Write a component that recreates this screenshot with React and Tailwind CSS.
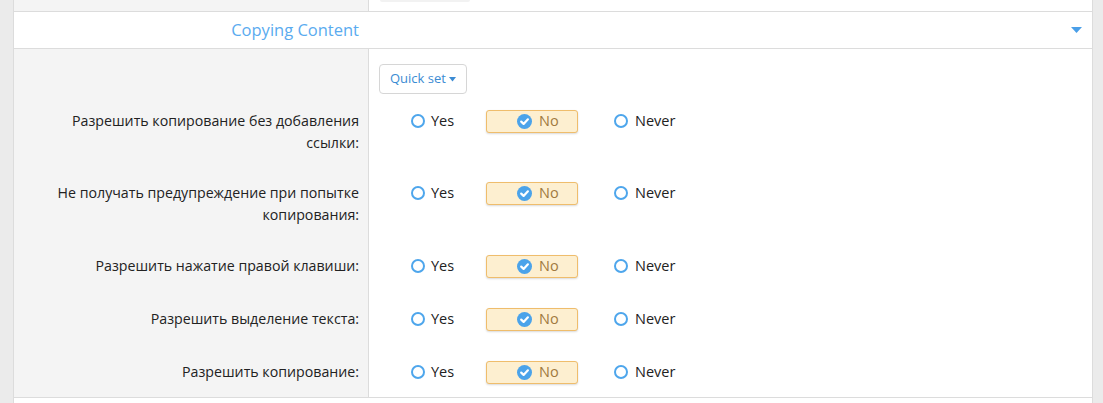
import React from "react";

const rows = [
  { lines: ["Разрешить копирование без добавления", "ссылки:"], h: "h-[72px]" },
  { lines: ["Не получать предупреждение при попытке", "копирования:"], h: "h-[73px]" },
  { lines: ["Разрешить нажатие правой клавиши:"], h: "h-[53px]" },
  { lines: ["Разрешить выделение текста:"], h: "h-[53px]" },
  { lines: ["Разрешить копирование:"], h: "h-[36px]" },
];

function Circle() {
  return <span className="block w-[14px] h-[14px] rounded-full border-[2.5px] border-[#4ea6ec] bg-white shrink-0" />;
}

function Checked() {
  return (
    <svg width="15" height="15" viewBox="0 0 15 15" className="shrink-0">
      <circle cx="7.5" cy="7.5" r="7.5" fill="#4ba3ea" />
      <path d="M4.2 7.6 L6.6 9.9 L10.9 5.3" fill="none" stroke="#fff" strokeWidth="2.2" strokeLinecap="round" strokeLinejoin="round" />
    </svg>
  );
}

function Options() {
  return (
    <div className="flex items-center h-[22px] text-[14.5px]">
      <div className="flex items-center w-[75px] ml-[42px]">
        <Circle />
        <span className="ml-[6px] text-[#222]">Yes</span>
      </div>
      <div className="flex items-center w-[92px] h-[23px] pl-[30px] rounded-[3px] border border-[#efbd6c] bg-[#fdefd0] shadow-[0_1px_2px_rgba(0,0,0,0.15)]">
        <Checked />
        <span className="ml-[7px] text-[#a07a3e]">No</span>
      </div>
      <div className="flex items-center ml-[36px]">
        <Circle />
        <span className="ml-[7px] text-[#222]">Never</span>
      </div>
    </div>
  );
}

export default function App() {
  return (
    <div className="flex w-[1103px] h-[403px] bg-[#ebebeb] overflow-hidden" style={{ fontFamily: '"Open Sans", "Noto Sans", sans-serif' }}>
      <div className="w-[14px] shrink-0 border-r border-[#dcdcdc]" />
      <div className="w-[1079px] shrink-0 flex flex-col bg-white border-r border-[#dcdcdc]">
        <div className="flex h-[12px] border-b border-[#dcdcdc] shrink-0">
          <div className="w-[355px] bg-[#f4f4f4] border-r border-[#dcdcdc]" />
          <div className="flex-1">
            <div className="ml-[11px] w-[90px] h-[2px] rounded-b bg-[#f2f2f2]" />
          </div>
        </div>
        <div className="flex items-center h-[37px] border-b border-[#dcdcdc] shrink-0">
          <div className="w-[355px] pr-[10px] text-right text-[16.5px] text-[#5aabef]">Copying Content</div>
          <div className="flex-1 flex justify-end pr-[10px]">
            <svg width="11" height="6" viewBox="0 0 11 6"><path d="M0 0 H11 L5.5 6 Z" fill="#4a9fe8" /></svg>
          </div>
        </div>
        <div className="flex border-b border-[#dcdcdc] shrink-0">
          <div className="w-[355px] bg-[#f4f4f4] border-r border-[#dcdcdc] pr-[9px] text-right text-[14.2px] text-[#222] leading-[22px]">
            <div className="h-[61px]" />
            {rows.map((r, i) => (
              <div key={i} className={r.h}>
                {r.lines.map((l, j) => (
                  <span key={j} className="block whitespace-nowrap">{l}</span>
                ))}
              </div>
            ))}
          </div>
          <div className="flex-1">
            <div className="h-[61px] pt-[15px] pl-[10px]">
              <button className="flex items-center h-[30px] px-[10px] rounded-[4px] border border-[#d6d6d6] bg-white text-[13px] text-[#3b8bd3]">
                Quick set
                <svg width="7" height="5" viewBox="0 0 7 5" className="ml-[3px]"><path d="M0 0 H7 L3.5 4.5 Z" fill="#3b8bd3" /></svg>
              </button>
            </div>
            {rows.map((r, i) => (
              <div key={i} className={r.h}>
                <Options />
              </div>
            ))}
          </div>
        </div>
        <div className="flex-1" />
      </div>
      <div className="flex-1" />
    </div>
  );
}
